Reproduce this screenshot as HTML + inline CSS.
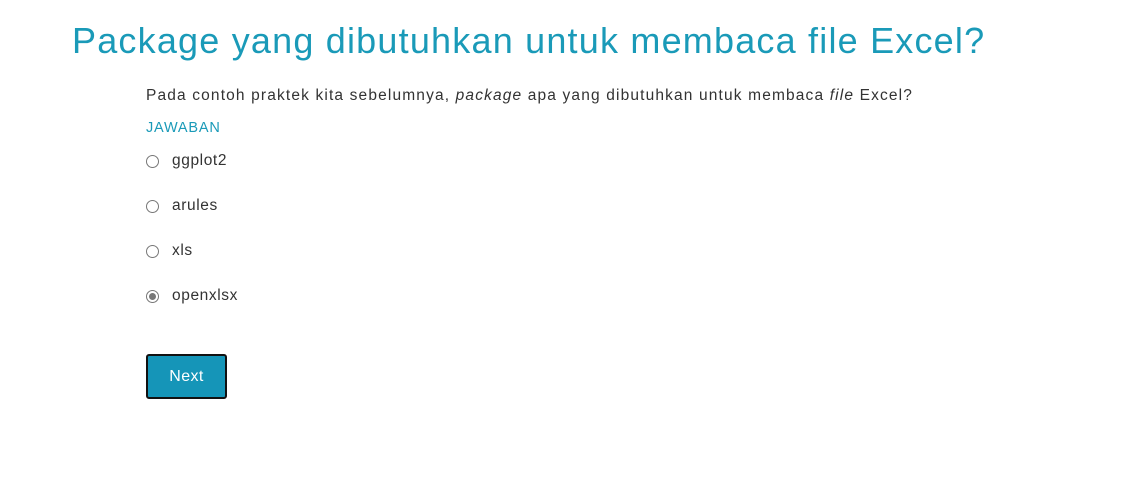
<!DOCTYPE html>
<html><head><style>
body{margin:0;background:#fff;font-family:"Liberation Sans",sans-serif;color:#333;width:1131px;height:478px;overflow:hidden;position:relative}
h1{position:absolute;left:72px;top:20px;margin:0;font-size:36px;font-weight:normal;color:#1a9ab8;letter-spacing:1.2px;white-space:nowrap}
.q{position:absolute;left:146px;top:87px;font-size:15.5px;letter-spacing:1.15px;white-space:nowrap;color:#333}
.j{position:absolute;left:146px;top:120px;font-size:14.5px;color:#1a9ab8;letter-spacing:0.8px}
.o{position:absolute;left:146px;font-size:15.5px;letter-spacing:0.6px;display:flex;align-items:center}
.r{width:11px;height:11px;border:1px solid #777;border-radius:50%;margin-right:13px;position:relative}
.r.c::after{content:"";position:absolute;left:2px;top:2px;width:7px;height:7px;border-radius:50%;background:#777}
.btn{position:absolute;left:146px;top:354px;width:77px;height:41px;background:#1595b8;border:2px solid #111;border-radius:3px;color:#fff;font-size:16px;display:flex;align-items:center;justify-content:center;letter-spacing:0.4px}
</style></head><body>
<h1>Package yang dibutuhkan untuk membaca file Excel?</h1>
<div class="q">Pada contoh praktek kita sebelumnya, <i>package</i> apa yang dibutuhkan untuk membaca <i>file</i> Excel?</div>
<div class="j">JAWABAN</div>
<div class="o" style="top:152px"><span class="r"></span>ggplot2</div>
<div class="o" style="top:197px"><span class="r"></span>arules</div>
<div class="o" style="top:242px"><span class="r"></span>xls</div>
<div class="o" style="top:287px"><span class="r c"></span>openxlsx</div>
<div class="btn">Next</div>
</body></html>
